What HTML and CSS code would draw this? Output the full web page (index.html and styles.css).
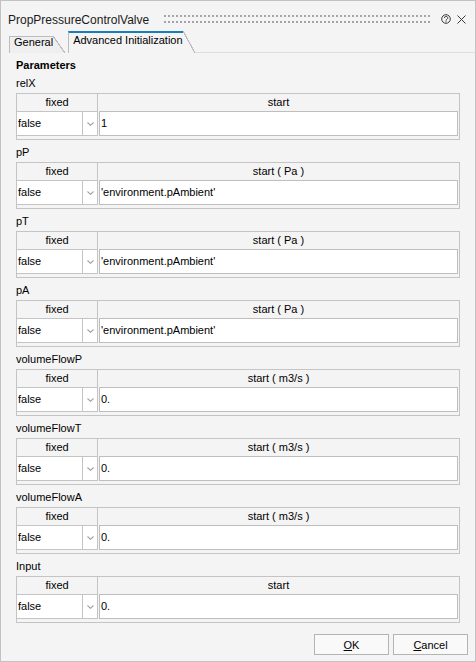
FILE: index.html
```html
<!DOCTYPE html>
<html>
<head>
<meta charset="utf-8">
<link rel="stylesheet" href="styles.css">
</head>
<body>
<div class="win">
  <div class="titlebar">
    <span class="title">PropPressureControlValve</span>
    <span class="grip"></span>
    <span class="help"><svg width="10" height="10" viewBox="0 0 10 10"><circle cx="5" cy="5" r="4.3" fill="none" stroke="#3a3a3a" stroke-width="1"/><path d="M3.5 4 A1.6 1.6 0 1 1 5.9 5.3 C5.3 5.6 5 5.9 5 6.6" fill="none" stroke="#3a3a3a" stroke-width="1"/><rect x="4.5" y="7.3" width="1" height="1" fill="#3a3a3a"/></svg></span>
    <span class="close"><svg width="9" height="9" viewBox="0 0 9 9"><path d="M0.5 0.5 L8.5 8.5 M8.5 0.5 L0.5 8.5" stroke="#3a3a3a" stroke-width="1"/></svg></span>
  </div>
  <div class="tabs">
    <div class="tab inactive"><span class="tl">General</span><span class="slant"></span></div>
    <div class="tab active"><span class="tl">Advanced Initialization</span><span class="slant"></span></div>
    <div class="tabfill"></div>
  </div>
  <div class="content">
    <div class="heading">Parameters</div>

    <div class="plabel">relX</div>
    <div class="tbl">
      <div class="thead"><div class="hf">fixed</div><div class="hs">start</div></div>
      <div class="trow"><div class="combo"><div class="val">false</div><div class="arrow"><svg width="7" height="4" viewBox="0 0 7 4"><polyline points="0.5,0.5 3.5,3.3 6.5,0.5" fill="none" stroke="#a0a0a0" stroke-width="1.1"/></svg></div></div><div class="inp">1</div></div>
    </div>

    <div class="plabel">pP</div>
    <div class="tbl">
      <div class="thead"><div class="hf">fixed</div><div class="hs">start ( Pa )</div></div>
      <div class="trow"><div class="combo"><div class="val">false</div><div class="arrow"><svg width="7" height="4" viewBox="0 0 7 4"><polyline points="0.5,0.5 3.5,3.3 6.5,0.5" fill="none" stroke="#a0a0a0" stroke-width="1.1"/></svg></div></div><div class="inp">'environment.pAmbient'</div></div>
    </div>

    <div class="plabel">pT</div>
    <div class="tbl">
      <div class="thead"><div class="hf">fixed</div><div class="hs">start ( Pa )</div></div>
      <div class="trow"><div class="combo"><div class="val">false</div><div class="arrow"><svg width="7" height="4" viewBox="0 0 7 4"><polyline points="0.5,0.5 3.5,3.3 6.5,0.5" fill="none" stroke="#a0a0a0" stroke-width="1.1"/></svg></div></div><div class="inp">'environment.pAmbient'</div></div>
    </div>

    <div class="plabel">pA</div>
    <div class="tbl">
      <div class="thead"><div class="hf">fixed</div><div class="hs">start ( Pa )</div></div>
      <div class="trow"><div class="combo"><div class="val">false</div><div class="arrow"><svg width="7" height="4" viewBox="0 0 7 4"><polyline points="0.5,0.5 3.5,3.3 6.5,0.5" fill="none" stroke="#a0a0a0" stroke-width="1.1"/></svg></div></div><div class="inp">'environment.pAmbient'</div></div>
    </div>

    <div class="plabel">volumeFlowP</div>
    <div class="tbl">
      <div class="thead"><div class="hf">fixed</div><div class="hs">start ( m3/s )</div></div>
      <div class="trow"><div class="combo"><div class="val">false</div><div class="arrow"><svg width="7" height="4" viewBox="0 0 7 4"><polyline points="0.5,0.5 3.5,3.3 6.5,0.5" fill="none" stroke="#a0a0a0" stroke-width="1.1"/></svg></div></div><div class="inp">0.</div></div>
    </div>

    <div class="plabel">volumeFlowT</div>
    <div class="tbl">
      <div class="thead"><div class="hf">fixed</div><div class="hs">start ( m3/s )</div></div>
      <div class="trow"><div class="combo"><div class="val">false</div><div class="arrow"><svg width="7" height="4" viewBox="0 0 7 4"><polyline points="0.5,0.5 3.5,3.3 6.5,0.5" fill="none" stroke="#a0a0a0" stroke-width="1.1"/></svg></div></div><div class="inp">0.</div></div>
    </div>

    <div class="plabel">volumeFlowA</div>
    <div class="tbl">
      <div class="thead"><div class="hf">fixed</div><div class="hs">start ( m3/s )</div></div>
      <div class="trow"><div class="combo"><div class="val">false</div><div class="arrow"><svg width="7" height="4" viewBox="0 0 7 4"><polyline points="0.5,0.5 3.5,3.3 6.5,0.5" fill="none" stroke="#a0a0a0" stroke-width="1.1"/></svg></div></div><div class="inp">0.</div></div>
    </div>

    <div class="plabel">Input</div>
    <div class="tbl">
      <div class="thead"><div class="hf">fixed</div><div class="hs">start</div></div>
      <div class="trow"><div class="combo"><div class="val">false</div><div class="arrow"><svg width="7" height="4" viewBox="0 0 7 4"><polyline points="0.5,0.5 3.5,3.3 6.5,0.5" fill="none" stroke="#a0a0a0" stroke-width="1.1"/></svg></div></div><div class="inp">0.</div></div>
    </div>
  </div>
  <div class="footer">
    <button class="btn"><u>O</u>K</button>
    <button class="btn"><u>C</u>ancel</button>
  </div>
</div>
</body>
</html>
```
FILE: styles.css
```css
html, body {
  margin: 0;
  padding: 0;
  background: #f4f4f4;
}

.win {
  width: 476px;
  height: 662px;
  box-sizing: border-box;
  border: 1px solid #c2c2c2;
  background: #f4f4f4;
  font-family: "Liberation Sans", Arial, sans-serif;
  font-size: 11px;
  color: #000;
  display: flex;
  flex-direction: column;
  overflow: hidden;
}

/* title bar */
.titlebar {
  height: 30px;
  flex: none;
  display: flex;
  align-items: flex-start;
  padding: 0 9px 0 7px;
}

.title {
  font-size: 12px;
  line-height: 14px;
  padding-top: 12px;
  color: #1a1a1a;
}

.grip {
  flex: 1;
  height: 8px;
  margin: 14px 0 0 13px;
  background-image:
    linear-gradient(90deg, #f4f4f4 2px, transparent 2px),
    linear-gradient(#a4a4a4 2px, transparent 2px);
  background-size: 4px 6px, 4px 6px;
}

.help {
  width: 10px;
  height: 10px;
  margin: 13px 0 0 10px;
  display: flex;
}

.close {
  width: 9px;
  height: 9px;
  margin: 14px 0 0 6px;
  display: flex;
}

/* tabs */
.tabs {
  height: 22px;
  flex: none;
  display: flex;
  align-items: flex-end;
  padding-left: 8px;
}

.tab {
  display: flex;
  align-items: stretch;
  box-sizing: border-box;
}

.tab .tl {
  border-left: 1px solid #bcbcbc;
  border-top: 1px solid #bcbcbc;
  padding-left: 4px;
  line-height: 11px;
  white-space: nowrap;
}

.tab .slant {
  width: 12px;
}

.tab.inactive {
  height: 17px;
}

.tab.inactive .tl {
  background: #efefef;
}

.tab.inactive .slant {
  background: linear-gradient(to bottom left, transparent calc(50% - 0.7px), #bcbcbc calc(50% - 0.5px), #bcbcbc calc(50% + 0.5px), #efefef calc(50% + 0.7px));
}

.tab.active {
  height: 22px;
  margin-left: 3px;
}

.tab.active .tl {
  border-top: 2px solid #1b7db6;
  padding-top: 2px;
}

.tab.active .slant {
  background: linear-gradient(to bottom left, transparent calc(50% - 0.7px), #bcbcbc calc(50% - 0.5px), #bcbcbc calc(50% + 0.5px), transparent calc(50% + 0.7px));
}

.tabfill {
  flex: 1;
  align-self: stretch;
  border-bottom: 1px solid #dedede;
}

/* content */
.content {
  flex: none;
  padding: 7px 15px 0 15px;
}

.heading {
  font-weight: bold;
  line-height: 11px;
}

.plabel {
  padding: 4.5px 0 3.5px 0;
  line-height: 14px;
}

.tbl {
  height: 47px;
  box-sizing: border-box;
  border: 1px solid #c4c4c4;
}

.thead {
  display: flex;
  height: 17px;
  line-height: 17px;
  text-align: center;
}

.thead .hf {
  width: 80px;
  border-right: 1px solid #c4c4c4;
}

.thead .hs {
  flex: 1;
}

.trow {
  display: flex;
  height: 25px;
}

.combo {
  width: 80px;
  display: flex;
  border: 1px solid #c4c4c4;
  border-left: 0;
  background: #fff;
}

.combo .val {
  width: 64px;
  padding-left: 1px;
  border-right: 1px solid #c4c4c4;
  line-height: 23px;
}

.combo .arrow {
  flex: 1;
  display: flex;
  align-items: center;
  justify-content: center;
}

.inp {
  flex: 1;
  margin: 0 1px;
  border: 1px solid #bebebe;
  background: #fff;
  padding-left: 1px;
  line-height: 23px;
  white-space: nowrap;
}

/* footer */
.footer {
  flex: none;
  display: flex;
  justify-content: flex-end;
  gap: 4px;
  padding: 11px 7px 0 0;
}

.btn {
  width: 75px;
  height: 21px;
  box-sizing: border-box;
  border: 1px solid #b4b4b4;
  background: #f9f9f9;
  font-family: "Liberation Sans", Arial, sans-serif;
  font-size: 11px;
  color: #000;
  padding: 0;
  margin: 0;
  border-radius: 0;
}
```
